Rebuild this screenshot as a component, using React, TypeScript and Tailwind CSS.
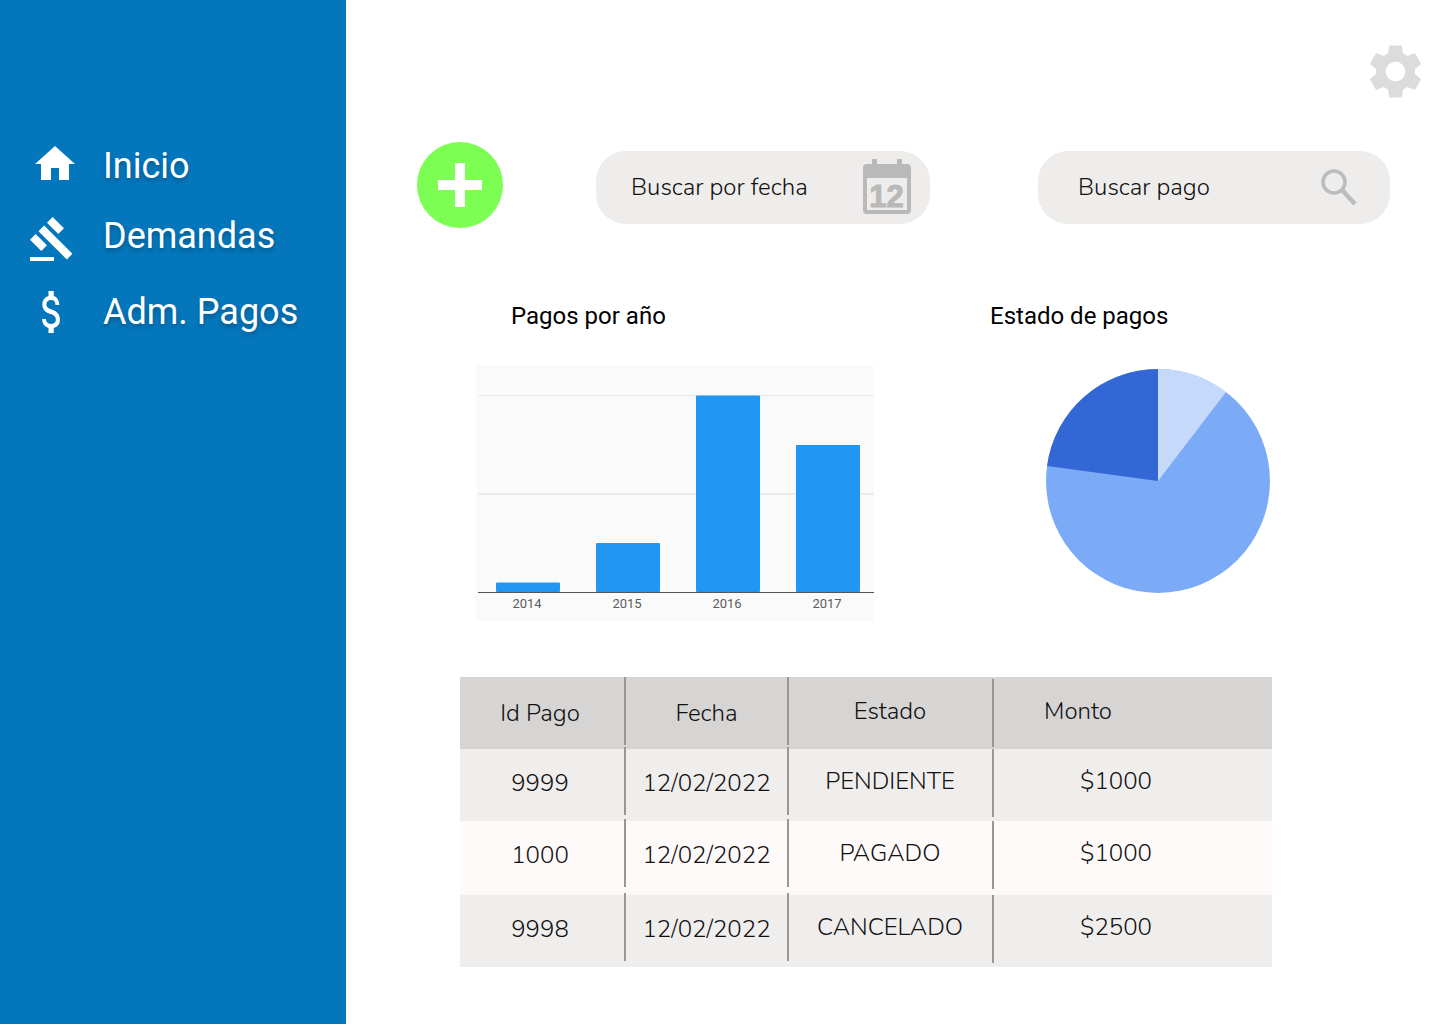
import React from "react";

function Home() {
  return (
    <svg viewBox="0 0 24 24" className="w-12 h-12 fill-white shrink-0">
      <path d="M10 20v-6h4v6h5v-8h3L12 3 2 12h3v8z" />
    </svg>
  );
}
function Gavel() {
  return (
    <svg viewBox="0 0 24 24" className="w-12 h-12 fill-white shrink-0">
      <path d="M1 21h12v2H1zM5.245 8.07l2.83-2.827 14.14 14.142-2.828 2.828zM12.317 1l5.657 5.656-2.83 2.83-5.654-5.66zM3.825 9.485l5.657 5.657-2.828 2.828-5.657-5.657z" />
    </svg>
  );
}
function Dollar() {
  return (
    <svg viewBox="0 0 24 24" preserveAspectRatio="none" className="w-[42px] h-[56px] fill-white shrink-0">
      <path d="M11.8 10.9c-2.27-.59-3-1.2-3-2.15 0-1.09 1.01-1.85 2.7-1.85 1.78 0 2.44.85 2.5 2.1h2.21c-.07-1.72-1.12-3.3-3.21-3.81V3h-3v2.16c-1.94.42-3.5 1.68-3.5 3.61 0 2.31 1.91 3.46 4.7 4.13 2.5.6 3 1.48 3 2.41 0 .69-.49 1.79-2.7 1.79-2.06 0-2.87-.92-2.98-2.1h-2.2c.12 2.19 1.76 3.42 3.68 3.83V21h3v-2.15c1.95-.37 3.5-1.5 3.5-3.55 0-2.84-2.43-3.81-4.7-4.4z" />
    </svg>
  );
}
function Gear() {
  return (
    <svg viewBox="0 0 24 24" className="w-[65px] h-[65px] fill-[#dcdcdc]">
      <path d="M19.14 12.94c.04-.3.06-.61.06-.94 0-.32-.02-.64-.07-.94l2.03-1.58c.18-.14.23-.41.12-.61l-1.92-3.32c-.12-.22-.37-.29-.59-.22l-2.39.96c-.5-.38-1.03-.7-1.62-.94l-.36-2.54c-.04-.24-.24-.41-.48-.41h-3.84c-.24 0-.43.17-.47.41l-.36 2.54c-.59.24-1.13.57-1.62.94l-2.39-.96c-.22-.08-.47 0-.59.22L2.74 8.87c-.12.21-.08.47.12.61l2.03 1.58c-.05.3-.09.63-.09.94s.02.64.07.94l-2.03 1.58c-.18.14-.23.41-.12.61l1.92 3.32c.12.22.37.29.59.22l2.39-.96c.5.38 1.03.7 1.62.94l.36 2.54c.05.24.24.41.48.41h3.84c.24 0 .44-.17.47-.41l.36-2.54c.59-.24 1.13-.56 1.62-.94l2.39.96c.22.08.47 0 .59-.22l1.92-3.32c.12-.22.07-.47-.12-.61l-2.01-1.58zM12 15.6c-1.98 0-3.6-1.62-3.6-3.6s1.62-3.6 3.6-3.6 3.6 1.62 3.6 3.6-1.62 3.6-3.6 3.6z" />
    </svg>
  );
}
function Calendar() {
  return (
    <svg viewBox="0 0 48 55" className="w-12 h-[55px] -mt-[2px]">
      <rect x="0" y="5" width="48" height="50" rx="4" fill="#b9b9b9" />
      <rect x="9" y="0" width="5" height="9" fill="#b9b9b9" />
      <rect x="34" y="0" width="5" height="9" fill="#b9b9b9" />
      <rect x="4" y="19" width="40" height="32" fill="#eeedec" />
      <text x="23.5" y="48" textAnchor="middle" fontFamily="'Liberation Sans', sans-serif" fontWeight="700" fontSize="31" stroke="#b9b9b9" strokeWidth="1" fill="#b9b9b9">12</text>
    </svg>
  );
}
function Search() {
  return (
    <svg viewBox="0 0 36 38" className="w-9 h-[38px]" fill="none" stroke="#bcbcbc">
      <circle cx="13" cy="13" r="11" strokeWidth="3.5" />
      <path d="M21 21 L34 35" strokeWidth="4.5" />
    </svg>
  );
}
function Plus() {
  return (
    <svg viewBox="0 0 44 44" className="w-11 h-11 fill-white">
      <rect x="0" y="17" width="44" height="10" />
      <rect x="17" y="0" width="10" height="44" />
    </svg>
  );
}
function BarChart() {
  const bars = [
    { x: 20, y: 217.5, h: 9.5, l: "2014" },
    { x: 120, y: 178, h: 49, l: "2015" },
    { x: 220, y: 30.5, h: 196.5, l: "2016" },
    { x: 320, y: 80, h: 147, l: "2017" },
  ];
  return (
    <svg viewBox="0 0 398 256" className="w-[398px] h-[256px] bg-[#fafafa]">
      <rect x="2" y="30" width="396" height="1" fill="#e8e8e8" />
      <rect x="2" y="128" width="396" height="2" fill="#ececec" />
      {bars.map((b) => (
        <g key={b.l}>
          <rect x={b.x} y={b.y} width="64" height={b.h} rx="1" fill="#2196f3" />
          <text x={b.x + 31} y="243" textAnchor="middle" fontFamily="Roboto, sans-serif" fontSize="13" fill="#5a5a5a">{b.l}</text>
        </g>
      ))}
      <rect x="2" y="227" width="396" height="1" fill="#555555" />
    </svg>
  );
}
function Pie() {
  return (
    <svg viewBox="0 0 226 226" className="w-[226px] h-[226px]">
      <circle cx="113" cy="113" r="112" fill="#7babf7" />
      <path d="M113 113 L113 1 A112 112 0 0 1 181 24 Z" fill="#c5d9fb" />
      <path d="M113 113 L2 98 A112 112 0 0 1 113 1 Z" fill="#3367d6" />
    </svg>
  );
}

const font = "font-['Nunito','Lato','Noto_Sans',sans-serif] font-light";

const rows = [
  { bg: "bg-[#d6d5d4]", h: "h-[72px]", first: true, cells: ["Id Pago", "Fecha", "Estado", "Monto"], head: true },
  { bg: "bg-[#f0eeed]", h: "h-[72px]", cells: ["9999", "12/02/2022", "PENDIENTE", "$1000"] },
  { bg: "bg-[#fefafa]", h: "h-[74px]", cells: ["1000", "12/02/2022", "PAGADO", "$1000"] },
  { bg: "bg-[#f0eeed]", h: "h-[72px]", cells: ["9998", "12/02/2022", "CANCELADO", "$2500"] },
];

export default function App() {
  return (
    <div className="flex w-[1440px] h-[1024px] bg-white overflow-hidden">
      <aside className="w-[346px] shrink-0 bg-[#0477bc] pt-[131px] text-white font-['Roboto',sans-serif] text-[36px] [text-shadow:0_3px_4px_rgba(0,0,0,0.25)]">
        <div className="flex items-center h-[70px] pl-[31px] gap-[24px]"><span className="-mt-1"><Home /></span><span>Inicio</span></div>
        <div className="flex items-center h-[70px] pl-[28px] gap-[27px]"><span className="mt-[5px]"><Gavel /></span><span>Demandas</span></div>
        <div className="flex items-center h-[82px] pl-[31px] gap-[30px]"><Dollar /><span>Adm. Pagos</span></div>
      </aside>
      <main className="flex-1 flex flex-col">
        <div className="flex justify-end pt-[39px] pr-[12px]"><Gear /></div>
        <div className="flex items-start mt-[38px] pl-[71px]">
          <button className="w-[86px] h-[86px] rounded-full bg-[#7cff52] flex items-center justify-center"><Plus /></button>
          <div className={`ml-[93px] mt-[9px] w-[334px] h-[73px] rounded-[30px] bg-[#eeedec] flex items-center justify-between pl-[35px] pr-[19px] text-[24px] text-[#111] ${font}`}>
            <span className="pb-[2px]">Buscar por fecha</span><Calendar />
          </div>
          <div className={`ml-[108px] mt-[9px] w-[352px] h-[73px] rounded-[30px] bg-[#eeedec] flex items-center justify-between pl-[40px] pr-[33px] text-[24px] text-[#111] ${font}`}>
            <span className="pb-[1px]">Buscar pago</span><Search />
          </div>
        </div>
        <div className="flex mt-[74px] text-[24px] text-black font-['Roboto',sans-serif] leading-[28px]">
          <div className="w-[514px] pl-[130px] shrink-0">
            <h2 className="pl-[35px]">Pagos por año</h2>
            <div className="mt-[35px]"><BarChart /></div>
          </div>
          <div className="pl-[130px]">
            <h2>Estado de pagos</h2>
            <div className="mt-[38px] ml-[55px]"><Pie /></div>
          </div>
        </div>
        <div className={`mt-[56px] ml-[114px] w-[812px] text-[24px] text-[#111] ${font}`}>
          {rows.map((r, i) => (
            <div key={i} className={`grid grid-cols-[166px_163px_205px_278px] items-start ${r.bg} ${r.h}`}>
              <div className={`flex items-center justify-center h-[68px] pt-[4px] pr-[4px] border-r-2 border-[#999794] ${r.first ? "" : "-mt-[2px]"}`}>{r.cells[0]}</div>
              <div className={`flex items-center justify-center h-[68px] pt-[4px] border-r-2 border-[#999794] ${r.first ? "" : "-mt-[2px]"}`}>{r.cells[1]}</div>
              <div className={`flex items-center justify-center h-[68px] pb-[4px] pr-[1px] border-r-2 border-[#999794] ${r.first ? "mt-[2px]" : ""}`}>{r.cells[2]}</div>
              <div className={`flex items-center justify-center h-[68px] pb-[4px] ${r.first ? "mt-[2px] pr-[110px]" : "pr-[34px]"}`}>{r.cells[3]}</div>
            </div>
          ))}
        </div>
      </main>
    </div>
  );
}
